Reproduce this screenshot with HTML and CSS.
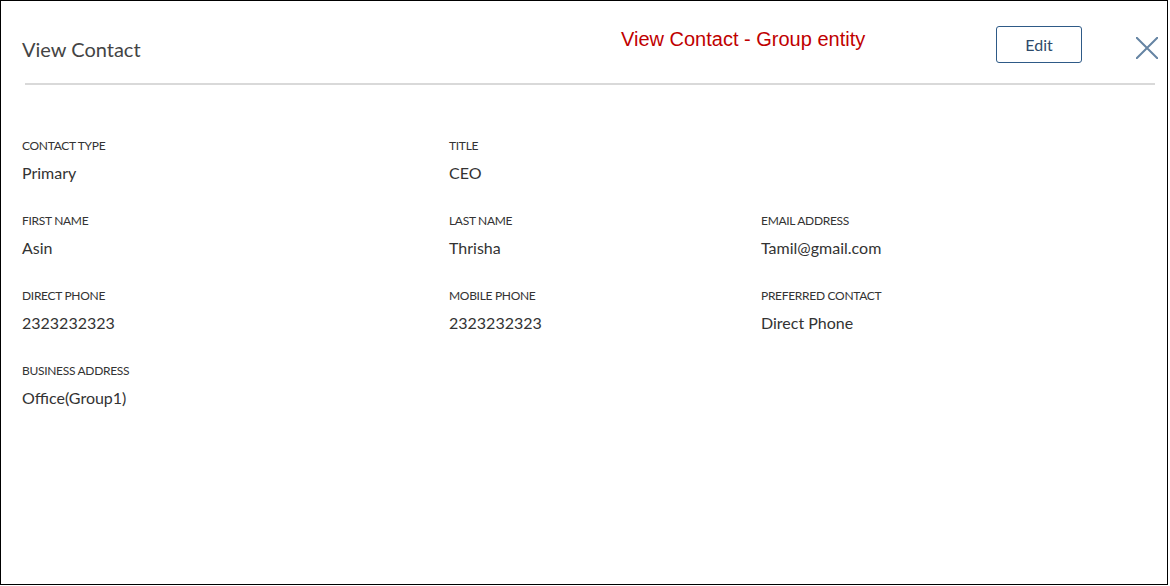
FILE: index.html
```html
<!DOCTYPE html>
<html lang="en">
<head>
  <meta charset="UTF-8" />
  <title>View Contact</title>
  <link rel="stylesheet" href="styles.css">
</head>
<body>

<div class="frame">
  <header class="head">
    <h1 class="title">View Contact</h1>
    <span class="note">View Contact - Group entity</span>
    <button class="edit" type="button">Edit</button>
    <button class="close" type="button" aria-label="Close">
      <svg width="22" height="22" viewBox="0 0 22 22">
        <path d="M0 0 L22 22 M22 0 L0 22" stroke="#6584a3" stroke-width="2" fill="none"/>
      </svg>
    </button>
  </header>

  <div class="details">
    <div class="row">
      <div class="field"><div class="label">Contact Type</div><div class="value">Primary</div></div>
      <div class="field"><div class="label">Title</div><div class="value">CEO</div></div>
    </div>
    <div class="row">
      <div class="field"><div class="label">First Name</div><div class="value">Asin</div></div>
      <div class="field"><div class="label">Last Name</div><div class="value">Thrisha</div></div>
      <div class="field"><div class="label">Email Address</div><div class="value">Tamil@gmail.com</div></div>
    </div>
    <div class="row">
      <div class="field"><div class="label">Direct Phone</div><div class="value">2323232323</div></div>
      <div class="field"><div class="label">Mobile Phone</div><div class="value">2323232323</div></div>
      <div class="field"><div class="label">Preferred Contact</div><div class="value">Direct Phone</div></div>
    </div>
    <div class="row">
      <div class="field"><div class="label">Business Address</div><div class="value">Office(Group1)</div></div>
    </div>
  </div>
</div>

</body>
</html>
```

FILE: styles.css
```css
body {
  margin: 0;
  font-family: Lato, "Open Sans", sans-serif;
  color: #333;
  background: #fff;
}
.frame {
  width: 1168px;
  height: 585px;
  border: 1px solid #000;
  box-sizing: border-box;
}
.head {
  display: flex;
  align-items: center;
  margin: 0 12px 0 24px;
  height: 82px;
  border-bottom: 2px solid #d9d9d9;
}
.head > * {
  flex-shrink: 0;
}
.title {
  margin: 0 0 0 -3px;
  font-weight: normal;
  font-size: 20px;
  color: #444;
  width: 597px;
  padding-top: 14px;
}
.note {
  font-family: "Liberation Sans", Arial, sans-serif;
  font-size: 20px;
  color: #c00000;
  width: 375px;
  margin-left: 2px;
  padding-bottom: 6px;
}
.edit {
  width: 86px;
  height: 37px;
  padding: 0;
  background: #fff;
  border: 1px solid #2e5a87;
  border-radius: 3px;
  font-family: inherit;
  font-size: 16px;
  color: #2e4a6a;
  margin-top: 4px;
}
.close {
  margin: 12px -3px 0 54px;
  padding: 0;
  border: none;
  background: none;
  line-height: 0;
}
.details {
  padding: 53px 0 0 21px;
}
.row {
  display: flex;
  height: 75px;
}
.field:nth-child(1) { width: 427px; }
.field:nth-child(2) { width: 312px; }
.label {
  font-size: 12px;
  text-transform: uppercase;
  color: #333;
  letter-spacing: -0.3px;
}
.value {
  font-size: 16px;
  margin-top: 10px;
}
```
